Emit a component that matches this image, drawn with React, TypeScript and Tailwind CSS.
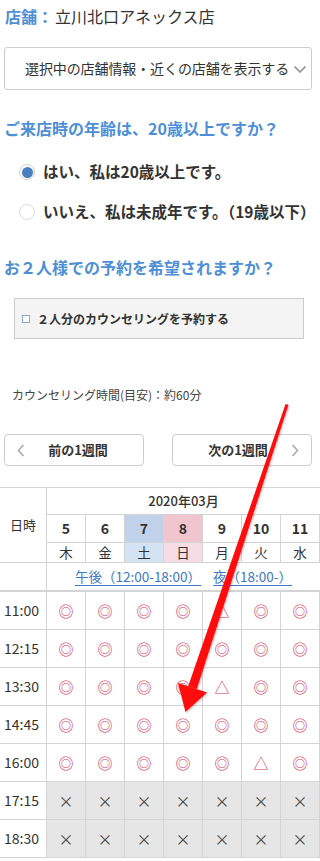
import React from "react";

const F = { fontFamily: '"Noto Sans CJK JP", "Noto Sans", sans-serif' };

const days = [
  { d: "5", w: "木", t: "" },
  { d: "6", w: "金", t: "" },
  { d: "7", w: "土", t: "sat" },
  { d: "8", w: "日", t: "sun" },
  { d: "9", w: "月", t: "" },
  { d: "10", w: "火", t: "" },
  { d: "11", w: "水", t: "" },
];

const rows: { time: string; v: string[]; gray?: boolean }[] = [
  { time: "11:00", v: ["o", "o", "o", "o", "t", "o", "o"] },
  { time: "12:15", v: ["o", "o", "o", "o", "o", "o", "o"] },
  { time: "13:30", v: ["o", "o", "o", "o", "t", "o", "o"] },
  { time: "14:45", v: ["o", "o", "o", "o", "o", "o", "o"] },
  { time: "16:00", v: ["o", "o", "o", "o", "o", "t", "o"] },
  { time: "17:15", v: ["x", "x", "x", "x", "x", "x", "x"], gray: true },
  { time: "18:30", v: ["x", "x", "x", "x", "x", "x", "x"], gray: true },
];

function Sym({ k }: { k: string }) {
  if (k === "o") return <span className="text-[15px] leading-none text-[#d3385f]">◎</span>;
  if (k === "t") return <span className="text-[15px] leading-none text-[#d3385f]">△</span>;
  return <span className="text-[15px] leading-none text-[#444]">×</span>;
}

export default function App() {
  return (
    <div className="relative w-[320px] h-[861px] overflow-hidden bg-white text-[#333]" style={F}>
      {/* title */}
      <div className="h-[32px] flex items-center pl-[5px] text-[16px]">
        <span className="font-bold text-[#4d8fd6]">店舗：</span>
        <span className="ml-[2px]">立川北口アネックス店</span>
      </div>

      {/* select */}
      <div className="mt-[15px] ml-[4px] w-[308px] h-[43px] border border-[#cccccc] rounded-[3px] flex items-center pl-[20px] relative">
        <span className="text-[14px] tracking-[-0.1px] whitespace-nowrap">選択中の店舗情報・近くの店舗を表示する</span>
        <svg className="absolute left-[288px] top-[17px]" width="14" height="9" viewBox="0 0 14 9">
          <path d="M1.5 1.5 L7 7 L12.5 1.5" fill="none" stroke="#a0a0a0" strokeWidth="1.8" />
        </svg>
      </div>

      {/* heading 1 */}
      <div className="mt-[26px] h-[24px] flex items-center pl-[4px] text-[16px] font-bold text-[#4d8fd6] whitespace-nowrap">
        ご来店時の年齢は、20歳以上ですか？
      </div>

      {/* radios */}
      <div className="mt-[20px] h-[24px] flex items-center pl-[19px] whitespace-nowrap">
        <span className="w-[16px] h-[16px] rounded-full border border-[#d0d0d0] flex items-center justify-center bg-white shrink-0">
          <span className="w-[11px] h-[11px] rounded-full bg-[#4a7fc1]" />
        </span>
        <span className="ml-[8px] text-[15.5px] font-bold">はい、私は20歳以上です。</span>
      </div>
      <div className="mt-[16px] h-[24px] flex items-center pl-[19px] whitespace-nowrap">
        <span className="w-[16px] h-[16px] rounded-full border border-[#dcdcdc] bg-white shrink-0" />
        <span className="ml-[8px] text-[15.5px] font-bold">いいえ、私は未成年です。（19歳以下）</span>
      </div>

      {/* heading 2 */}
      <div className="mt-[31px] h-[24px] flex items-center pl-[4px] text-[16px] font-bold text-[#4d8fd6] whitespace-nowrap">
        お２人様での予約を希望されますか？
      </div>

      {/* checkbox */}
      <div className="mt-[19px] ml-[14px] w-[290px] h-[41px] border border-[#cccccc] bg-[#f4f4f4] flex items-center pl-[7px]">
        <span className="w-[8px] h-[8px] border border-[#8fa6cc] bg-white" />
        <span className="ml-[7px] text-[12px] font-bold whitespace-nowrap">２人分のカウンセリングを予約する</span>
      </div>

      {/* duration */}
      <div className="mt-[46px] h-[20px] flex items-center pl-[12px] text-[12px] text-[#444] whitespace-nowrap">
        カウンセリング時間(目安)：約60分
      </div>

      {/* week buttons */}
      <div className="mt-[29px] flex justify-between px-[4px] pr-[8px]">
        <div className="relative w-[140px] h-[32px] border border-[#cccccc] rounded-[4px] flex items-center justify-center">
          <svg className="absolute left-[12px] top-[9px]" width="8" height="13" viewBox="0 0 8 13">
            <path d="M6.5 1 L1.5 6.5 L6.5 12" fill="none" stroke="#aaaaaa" strokeWidth="1.6" />
          </svg>
          <span className="text-[13px] font-bold ml-[8px]">前の1週間</span>
        </div>
        <div className="relative w-[140px] h-[32px] border border-[#cccccc] rounded-[4px] flex items-center justify-center">
          <span className="text-[13px] font-bold mr-[8px]">次の1週間</span>
          <svg className="absolute right-[12px] top-[9px]" width="8" height="13" viewBox="0 0 8 13">
            <path d="M1.5 1 L6.5 6.5 L1.5 12" fill="none" stroke="#aaaaaa" strokeWidth="1.6" />
          </svg>
        </div>
      </div>

      {/* table */}
      <div className="mt-[21px] border-t border-[#d4d4d4] grid grid-cols-[47px_repeat(7,39px)] grid-rows-[27px_28px_20px_29px]">
        <div className="row-span-3 border-r border-b border-[#d4d4d4] flex items-center justify-center text-[13px]">日時</div>
        <div className="col-span-7 border-b border-[#d4d4d4] flex items-center justify-center text-[13px] font-medium">2020年03月</div>
        {days.map((d) => (
          <div
            key={"d" + d.d}
            className={
              "border-r border-b border-[#d4d4d4] flex items-center justify-center text-[14px] font-bold " +
              (d.t === "sat" ? "bg-[#bfd2ea]" : d.t === "sun" ? "bg-[#f1c5ce]" : "")
            }
          >
            {d.d}
          </div>
        ))}
        {days.map((d) => (
          <div
            key={"w" + d.d}
            className={
              "border-r border-b border-[#d4d4d4] flex items-center justify-center text-[13.5px] " +
              (d.t === "sat" ? "bg-[#d4e3f3]" : d.t === "sun" ? "bg-[#f6dde5]" : "")
            }
          >
            {d.w}
          </div>
        ))}
        <div className="border-r border-b-2 border-[#d4d4d4]" />
        <div className="col-span-7 border-b-2 border-[#d4d4d4] flex items-center justify-center gap-[12px] text-[13.5px] text-[#3d78c4] whitespace-nowrap">
          <span className="underline underline-offset-[3px]">午後（12:00-18:00）</span>
          <span className="underline underline-offset-[3px]">夜（18:00-）</span>
        </div>
      </div>
      <div className="grid grid-cols-[47px_repeat(7,39px)] auto-rows-[38px]">
        {rows.map((r) => (
          <React.Fragment key={r.time}>
            <div className="border-r border-b border-[#d4d4d4] flex items-center pl-[4px] text-[14px] text-[#333]">{r.time}</div>
            {r.v.map((k, i) => (
              <div
                key={i}
                className={
                  "border-r border-b border-[#d4d4d4] flex items-center justify-center " +
                  (r.gray ? "bg-[#e6e6e6]" : "")
                }
              >
                <Sym k={k} />
              </div>
            ))}
          </React.Fragment>
        ))}
      </div>

      {/* red arrow overlay */}
      <svg className="absolute left-0 top-0 pointer-events-none" width="320" height="861" viewBox="0 0 320 861">
        <defs>
          <filter id="sh" x="-20%" y="-20%" width="140%" height="140%">
            <feDropShadow dx="1" dy="1" stdDeviation="1.2" floodColor="#000" floodOpacity="0.25" />
          </filter>
        </defs>
        <polygon
          filter="url(#sh)"
          fill="#ff0a0a"
          points="285.6,404 288.4,405 196.8,689 188.2,686.2 178,683 207,692.4 185.5,712 178,683 188.2,686.2"
        />
      </svg>
    </div>
  );
}
